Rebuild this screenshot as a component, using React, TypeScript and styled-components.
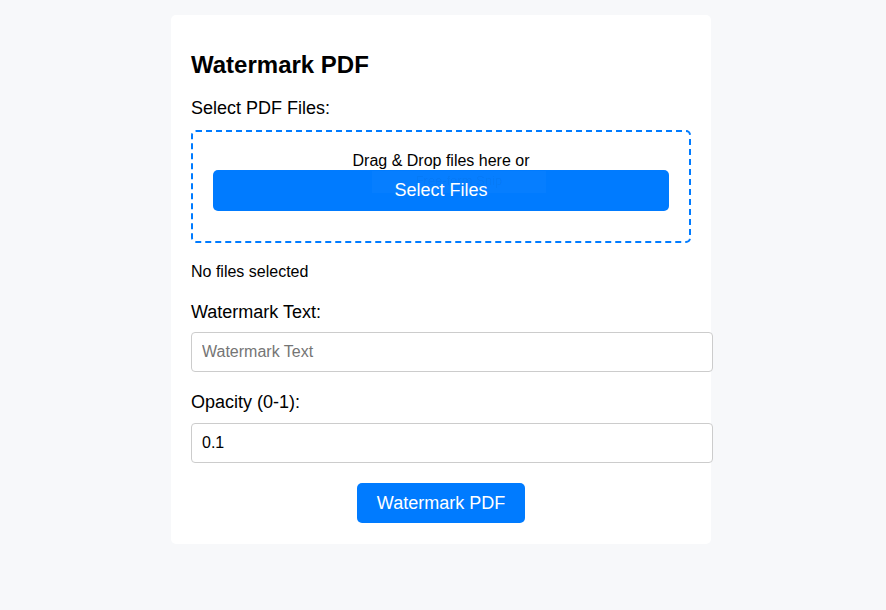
import React from "react";
import styled, { createGlobalStyle } from "styled-components";

const Global = createGlobalStyle`
  html, body {
    margin: 0;
    padding: 0;
    background: #f7f8fa;
    font-family: "Liberation Sans", Arial, sans-serif;
    color: #000;
  }
  * { box-sizing: content-box; }
`;

const Page = styled.div`
  display: flex;
  justify-content: center;
  align-items: flex-start;
  padding: 15px 4px 0 0;
  min-height: 595px;
`;

const Card = styled.div`
  width: 500px;
  background: #fff;
  border-radius: 5px;
  padding: 20px 20px 21px;
`;

const Title = styled.h2`
  margin: 16px 0 19px;
  font-size: 24px;
  font-weight: bold;
  line-height: 27.6px;
`;

const Label = styled.label<{ $gap?: number }>`
  display: block;
  font-size: 18px;
  line-height: 20.7px;
  margin-bottom: ${(p) => p.$gap ?? 10}px;
`;

const DropZone = styled.div`
  border: 2px dashed #007bff;
  border-radius: 5px;
  padding: 20px 20px 30px;
  text-align: center;
`;

const DropText = styled.div`
  font-size: 16px;
  line-height: 18px;
`;

const FullButton = styled.button`
  position: relative;
  display: block;
  width: 100%;
  box-sizing: border-box;
  height: 41px;
  border: none;
  border-radius: 5px;
  background: #007bff;
  color: #fff;
  font-family: "Liberation Sans", Arial, sans-serif;
  font-size: 18px;
  padding: 10px;
  cursor: pointer;
`;

const SnipTip = styled.span`
  position: absolute;
  left: 159px;
  top: 1px;
  width: 174px;
  height: 22px;
  background: rgba(255, 255, 255, 0.025);
  color: rgba(0, 0, 0, 0.05);
  font-size: 13px;
  line-height: 20px;
  text-align: center;
  pointer-events: none;
`;

const ButtonLabel = styled.span`
  position: relative;
`;

const Status = styled.p`
  margin: 20px 0 20px;
  font-size: 16px;
  line-height: 18.4px;
`;

const Field = styled.input`
  display: block;
  width: 100%;
  padding: 10px;
  border: 1px solid #ccc;
  border-radius: 4px;
  font-family: "Liberation Sans", Arial, sans-serif;
  font-size: 16px;
  line-height: 18px;
  height: 18px;
  color: #000;
  margin-bottom: 20px;
  outline: none;
  &::placeholder {
    color: #757575;
  }
`;

const Actions = styled.div`
  display: flex;
  justify-content: center;
`;

const SubmitButton = styled.button`
  border: none;
  border-radius: 5px;
  background: #007bff;
  color: #fff;
  font-family: "Liberation Sans", Arial, sans-serif;
  font-size: 18px;
  line-height: 20.7px;
  padding: 10px 20px 9px 20px;
  cursor: pointer;
`;

export default function App() {
  return (
    <>
      <Global />
      <Page>
        <Card>
          <Title>Watermark PDF</Title>
          <Label $gap={12}>Select PDF Files:</Label>
          <DropZone>
            <DropText>Drag &amp; Drop files here or</DropText>
            <FullButton>
              <SnipTip>Free-form Snip</SnipTip>
              <ButtonLabel>Select Files</ButtonLabel>
            </FullButton>
          </DropZone>
          <Status>No files selected</Status>
          <Label>Watermark Text:</Label>
          <Field placeholder="Watermark Text" />
          <Label>Opacity (0-1):</Label>
          <Field defaultValue="0.1" />
          <Actions>
            <SubmitButton>Watermark PDF</SubmitButton>
          </Actions>
        </Card>
      </Page>
    </>
  );
}
